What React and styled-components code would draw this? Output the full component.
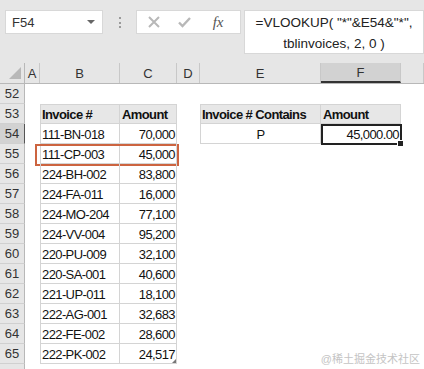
import React from "react";
import styled, { createGlobalStyle } from "styled-components";

const GlobalStyle = createGlobalStyle`
  body {
    margin: 0;
    background: #fff;
    font-family: "Liberation Sans", sans-serif;
  }
`;

const COLS = "25px 15px 80px 57px 23px 121px 80px 1fr";
const LINE = "#d4d4d4";

const Page = styled.div`
  position: relative;
  width: 424px;
  height: 369px;
  overflow: hidden;
  background: #fff;
`;

const Toolbar = styled.div`
  display: flex;
  align-items: flex-start;
  height: 63px;
  box-sizing: border-box;
  padding: 10px 0 0 5px;
  background: #e6e6e6;
`;

const NameBox = styled.div`
  display: flex;
  align-items: center;
  justify-content: space-between;
  width: 101px;
  height: 24px;
  box-sizing: border-box;
  padding: 0 7px 0 6px;
  background: #fff;
  border: 1px solid #d8d8d8;
  font-size: 13px;
  color: #333;
`;

const Caret = styled.span`
  width: 0;
  height: 0;
  border-left: 4px solid transparent;
  border-right: 4px solid transparent;
  border-top: 4px solid #666;
`;

const Grip = styled.div`
  width: 0;
  height: 11px;
  margin: 7px 15px 0 16px;
  border-left: 2px dotted #9a9a9a;
`;

const Buttons = styled.div`
  display: flex;
  align-items: center;
  width: 109px;
  height: 24px;
  box-sizing: border-box;
  padding-left: 11px;
  gap: 18px;
  background: #fff;
  border: 1px solid #d8d8d8;
`;

const Fx = styled.span`
  margin-left: 4px;
  font-family: "Liberation Serif", serif;
  font-style: italic;
  font-size: 15px;
  color: #555;
`;

const Formula = styled.div`
  width: 180px;
  height: 44px;
  margin-left: 3px;
  box-sizing: border-box;
  padding-top: 1px;
  flex-shrink: 0;
  background: #fff;
  border: 1px solid #d8d8d8;
  font-size: 13.5px;
  line-height: 21px;
  color: #222;
  text-align: center;
  white-space: nowrap;
`;

const HeadRow = styled.div`
  display: grid;
  grid-template-columns: ${COLS};
  height: 21px;
  box-sizing: border-box;
  background: #e6e6e6;
  border-bottom: 1px solid #b8b8b8;
`;

const ColHead = styled.div`
  display: flex;
  align-items: center;
  justify-content: center;
  box-sizing: border-box;
  border-right: 1px solid #c8c8c8;
  font-size: 13px;
  color: #333;
  background: ${p => (p.$active ? "#d2d2d2" : "transparent")};
  border-bottom: ${p => (p.$active ? "2px solid #333" : "none")};
`;

const Corner = styled.div`
  display: flex;
  align-items: flex-end;
  justify-content: flex-end;
  padding: 0 3px 4px 0;
  box-sizing: border-box;
  border-right: 1px solid #b8b8b8;
`;

const Row = styled.div`
  display: grid;
  grid-template-columns: ${COLS};
  height: 20px;
`;

const RowHead = styled.div`
  display: flex;
  align-items: center;
  justify-content: center;
  box-sizing: border-box;
  background: ${p => (p.$active ? "#d2d2d2" : "#e6e6e6")};
  border-right: 1px solid ${p => (p.$active ? "#555" : "#b8b8b8")};
  border-bottom: 1px solid #d0d0d0;
  font-size: 13px;
  color: #333;
`;

const Cell = styled.div`
  position: relative;
  display: flex;
  align-items: center;
  justify-content: ${p => p.$align || "flex-start"};
  padding: 0 2px;
  box-sizing: border-box;
  font-size: 13px;
  letter-spacing: -0.6px;
  font-weight: ${p => (p.$head ? 700 : 400)};
  color: #111;
  white-space: nowrap;
  background: ${p => (p.$head ? "#e7e7e7" : "transparent")};
  box-shadow: ${p =>
    p.$boxed
      ? `inset -1px -1px 0 ${LINE}${p.$left ? `, inset 1px 0 0 ${LINE}` : ""}${
          p.$top ? `, inset 0 1px 0 ${LINE}` : ""
        }`
      : "none"};
`;

const ResizeTip = styled.span`
  position: absolute;
  right: 1px;
  bottom: 1px;
  width: 0;
  height: 0;
  border-left: 4px solid transparent;
  border-bottom: 4px solid #777;
`;

const Selection = styled.div`
  position: absolute;
  inset: 0 -1px -1px 0;
  border: 2px solid #222;
  pointer-events: none;

  &::after {
    content: "";
    position: absolute;
    right: -4px;
    bottom: -4px;
    width: 5px;
    height: 5px;
    background: #222;
    border: 1px solid #fff;
  }
`;

const Mark = styled.div`
  position: absolute;
  left: -5px;
  top: 0;
  width: 144px;
  height: 22px;
  box-sizing: border-box;
  border: 2px solid #cc6440;
  pointer-events: none;
`;

const Watermark = styled.div`
  position: absolute;
  right: 4px;
  bottom: 3px;
  font-family: "Liberation Sans", "Noto Sans CJK SC", sans-serif;
  font-size: 11px;
  color: #c4c4c4;
`;

const letters = ["A", "B", "C", "D", "E", "F", ""];

const invoices = [
  ["111-BN-018", "70,000"],
  ["111-CP-003", "45,000"],
  ["224-BH-002", "83,800"],
  ["224-FA-011", "16,000"],
  ["224-MO-204", "77,100"],
  ["224-VV-004", "95,200"],
  ["220-PU-009", "32,100"],
  ["220-SA-001", "40,600"],
  ["221-UP-011", "18,100"],
  ["222-AG-001", "32,683"],
  ["222-FE-002", "28,600"],
  ["222-PK-002", "24,517"],
];

const Close = () => (
  <svg width="12" height="12" viewBox="0 0 12 12">
    <path d="M1 1 L11 11 M11 1 L1 11" stroke="#b8b8b8" strokeWidth="2" />
  </svg>
);

const Check = () => (
  <svg width="13" height="12" viewBox="0 0 13 12">
    <path d="M1 6.5 L4.5 10 L12 2" stroke="#b8b8b8" strokeWidth="2.4" fill="none" />
  </svg>
);

const CornerMark = () => (
  <svg width="12" height="12" viewBox="0 0 12 12">
    <path d="M12 0 L12 12 L0 12 Z" fill="#b8b8b8" />
  </svg>
);

const SheetRow = ({ n }) => {
  const idx = n - 54;
  const inv = invoices[idx];
  const isHead = n === 53;
  const inTable = isHead || !!inv;
  const last = n === 65;
  return (
    <Row>
      <RowHead $active={n === 54}>{n < 66 ? n : ""}</RowHead>
      <Cell />
      <Cell $boxed={inTable} $left $top={isHead} $head={isHead}>
        {isHead ? "Invoice #" : inv && inv[0]}
        {n === 55 && <Mark />}
      </Cell>
      <Cell $boxed={inTable} $top={isHead} $head={isHead} $align={isHead ? "flex-start" : "flex-end"}>
        {isHead ? "Amount" : inv && inv[1]}
        {last && <ResizeTip />}
      </Cell>
      <Cell />
      {n === 53 && (
        <>
          <Cell $boxed $left $top $head>Invoice # Contains</Cell>
          <Cell $boxed $top $head>Amount</Cell>
        </>
      )}
      {n === 54 && (
        <>
          <Cell $boxed $left $align="center">P</Cell>
          <Cell $boxed $align="flex-end">
            45,000.00
            <Selection />
          </Cell>
        </>
      )}
    </Row>
  );
};

const rowNumbers = Array.from({ length: 15 }, (_, i) => 52 + i);

const App = () => {
  return (
    <Page>
      <GlobalStyle />
      <Toolbar>
        <NameBox>
          F54
          <Caret />
        </NameBox>
        <Grip />
        <Buttons>
          <Close />
          <Check />
          <Fx>fx</Fx>
        </Buttons>
        <Formula>
          =VLOOKUP( "*"&amp;E54&amp;"*",
          <br />
          tblinvoices, 2, 0 )
        </Formula>
      </Toolbar>
      <HeadRow>
        <Corner>
          <CornerMark />
        </Corner>
        {letters.map((l, i) => (
          <ColHead key={i} $active={l === "F"}>
            {l}
          </ColHead>
        ))}
      </HeadRow>
      {rowNumbers.map(n => (
        <SheetRow key={n} n={n} />
      ))}
      <Watermark>@稀土掘金技术社区</Watermark>
    </Page>
  );
};

export default App;
